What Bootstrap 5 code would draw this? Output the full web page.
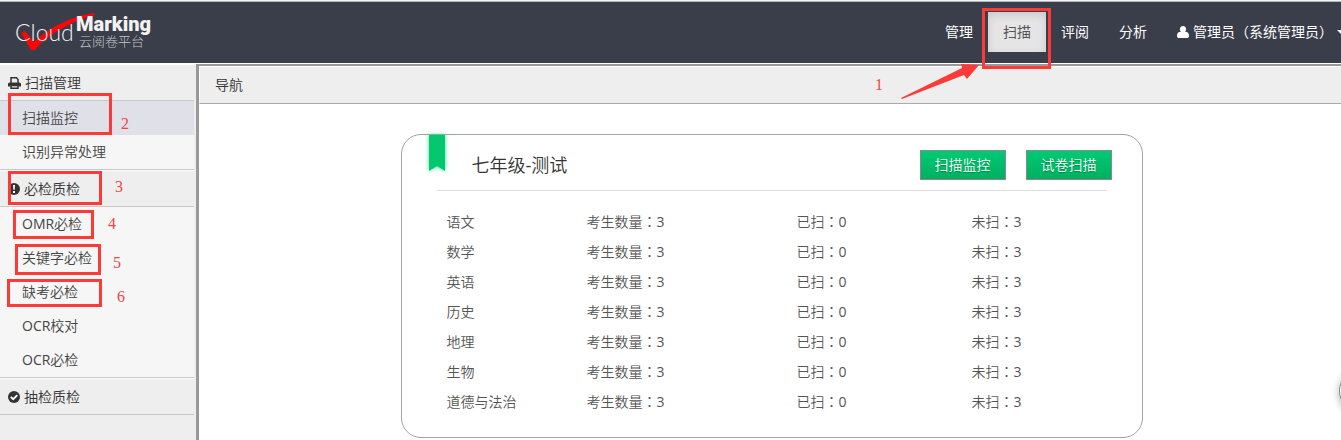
<!DOCTYPE html>
<html lang="zh-CN">
<head>
<meta charset="utf-8">
<meta name="viewport" content="width=device-width, initial-scale=1">
<title>云阅卷平台</title>
<link href="https://cdn.jsdelivr.net/npm/bootstrap@5.3.0/dist/css/bootstrap.min.css" rel="stylesheet">
<style>
  html, body { height: 100%; }
  body { font-family: "Open Sans", "Noto Sans CJK SC DemiLight", "Noto Sans CJK SC", sans-serif; font-size: 14px; line-height: 20px; color: #333; background: #fff; overflow: hidden; }
  a { color: inherit; text-decoration: none; }
  .topline { border-top: 1px solid #f4f4f4; }
  .topbar { height: 63px; border-top: 1px solid #b4b8bc; border-bottom: 1px solid #fff; background: #3a3d4a; }
  .logo { margin-left: 14px; }
  .topnav { height: 40px; margin: 10px -19px 0 0; color: #fff; font-family: "Open Sans", "Noto Sans CJK SC", sans-serif; }
  .topnav .nav-link { height: 40px; padding: 10px 15px; color: #fff; white-space: nowrap; }
  .topnav .nav-link.active { color: #555; background: #e5e5e5; box-shadow: inset 0 3px 8px rgba(0,0,0,.125); }
  .caret { border: 4px solid transparent; border-top-color: #fff; border-bottom: 0; }
  .sidebar { width: 196px; padding-right: 2px; background: #eee; }
  .side-head { height: 37px; padding-left: 8px; border-top: 1px solid #fff; border-bottom: 1px solid #c8c8c8; font-size: 14px; font-weight: 400; line-height: 20px; }
  .side-list { background: #f6f6f6; border-bottom: 1px solid #c8c8c8; }
  .side-list a { height: 34px; padding: 7px 22px; color: #444; }
  .side-list a.active { background: #e0e0e9; }
  .main { border-top: 2px solid #999; border-left: 3px solid #999; }
  .crumbs { height: 38px; padding: 8px 15px; border: solid #fff; border-width: 1px 0 0 1px; border-bottom: 1px solid #aaa; background: #eee; }
  .stage { padding: 30px 0 0 3px; }
  .exam { width: 742px; max-width: 100%; height: 304px; border: 1px solid #a2a2a2; border-radius: 20px; }
  .exam-head { padding: 0 30px 0 27px; height: 55px; }
  .exam-head h1 { margin: 19px 0 0 27px; font-size: 18px; line-height: 22px; font-weight: 400; }
  .ribbon { filter: drop-shadow(0 0 2px #2be08f); }
  .exam-actions { gap: 20px; margin-top: 15px; }
  .exam-head .btn { width: 86px; height: 30px; padding: 0; font-size: 14px; line-height: 20px; color: #fff; border: 1px solid #8a8a8a; border-radius: 0; background: linear-gradient(#00ca74, #00b061); text-shadow: 0 1px 1px rgba(0,0,0,.3); }
  .exam hr { margin: 0 35px; border-color: #ddd; opacity: 1; }
  .counts { width: 660px; margin: 16px 0 0 45px; table-layout: fixed; color: #555; }
  .counts th, .counts td { height: 30px; padding: 5px 0 0; font-weight: 400; line-height: 20px; text-align: left; vertical-align: top; }
  .colon { font-family: "Noto Sans CJK TC", sans-serif; line-height: 1; }
  .round-tool { right: -42px; top: 369px; width: 44px; height: 44px; padding: 0; border: 1px solid #888; border-radius: 50%; background: #fff; box-shadow: 0 2px 8px rgba(0,0,0,.3); }
  /* red walkthrough marks */
  .frame { border: 3px solid #fc3a38; pointer-events: none; z-index: 2; }
  .step { font: 16px/20px "Liberation Serif", serif; color: #f24444; z-index: 2; }
  .f1 { left: -6px; top: -4px; width: 69px; height: 61px; }
  .arrow { right: 66px; top: 50px; z-index: 2; }
  .s1 { right: 163px; top: 63px; }
  .f2 { left: 8px; top: -8px; width: 104px; height: 42px; } .s2 { left: 121px; top: 13px; }
  .f3 { left: 8px; top: 0; width: 94px; height: 34px; }     .s3 { left: 115px; top: 6px; }
  .f4 { left: 13px; top: 3px; width: 81px; height: 29px; }  .s4 { left: 108px; top: 7px; }
  .f5 { left: 15px; top: 3px; width: 86px; height: 31px; }  .s5 { left: 113px; top: 12px; }
  .f6 { left: 7px; top: 4px; width: 95px; height: 28px; }   .s6 { left: 117px; top: 12px; }
</style>
</head>
<body class="d-flex flex-column">
<header class="topline">
  <div class="topbar d-flex align-items-start justify-content-between">
    <a href="#" class="logo" aria-label="Cloud Marking 云阅卷平台">
      <svg width="150" height="60" viewBox="14 2 150 60" class="d-block">
        <path d="M21 33L25 31L34 42C48 28 72 16 94 13L95 15C76 20 50 32 35 50L31 50Z" fill="#fb0505"/>
        <text x="15" y="41" font-family="Lato" font-weight="300" font-size="23" fill="#f2f2f2">Cloud</text>
        <text x="76" y="31" font-family="Roboto" font-weight="900" font-size="20" fill="#f2f2f2">Marking</text>
        <text x="79" y="46" font-family="Noto Sans CJK SC" font-size="13" font-weight="300" fill="#c4c6ca">云阅卷平台</text>
      </svg>
    </a>
    <ul class="topnav nav flex-nowrap">
      <li class="nav-item"><a class="nav-link" href="#">管理</a></li>
      <li class="nav-item position-relative">
        <a class="nav-link active" href="#">扫描</a>
        <span class="frame f1 position-absolute"></span>
        <svg class="arrow position-absolute" width="80" height="38" viewBox="900 62 80 38"><path d="M901 98L962 68L961 64L979 65L967 79L964 75L902 99Z" fill="#fc3a38"/></svg>
        <span class="step s1 position-absolute">1</span>
      </li>
      <li class="nav-item"><a class="nav-link" href="#">评阅</a></li>
      <li class="nav-item"><a class="nav-link" href="#">分析</a></li>
      <li class="nav-item">
        <a class="nav-link d-flex align-items-center" href="#">
          <svg width="12" height="12" viewBox="0 0 11 12" preserveAspectRatio="none" class="me-1" fill="#fff"><path d="M5.500 0a3 3.200 0 0 1 1.800 5.700C9.500 5.400 11 7 11 9.700 11 11.200 10.300 12 9 12H2C.7 12 0 11.200 0 9.700 0 7 1.500 5.400 3.700 5.700A3 3.200 0 0 1 5.500 0z"/></svg>
          <span class="me-1">管理员（系统管理员）</span><span class="caret"></span>
        </a>
      </li>
    </ul>
  </div>
</header>
<div class="d-flex flex-grow-1">
  <nav class="sidebar flex-shrink-0">
    <h2 class="side-head d-flex align-items-center m-0">
      <svg width="13" height="12" viewBox="0 0 13 12" class="me-1" fill="none" stroke="#333" stroke-width="1.500"><path d="M3 6V.8h5.500L10 2.500V6M3 8.500h7v2.700H3z"/><path d="M0 9.500V7q0-1.500 1.500-1.500h10Q13 5.500 13 7v2.500h-2.500v-1.500h-8v1.500z" fill="#333" stroke="none"/></svg>
      扫描管理
    </h2>
    <div class="side-list">
      <a href="#" class="active d-block position-relative">扫描监控<span class="frame f2 position-absolute"></span><span class="step s2 position-absolute">2</span></a>
      <a href="#" class="d-block">识别异常处理</a>
    </div>
    <h2 class="side-head d-flex align-items-center m-0 position-relative">
      <svg width="12" height="12" viewBox="0 0 12 12" class="me-1"><circle cx="6" cy="6" r="6" fill="#333"/><path d="M5 2h2l-.3 4.800H5.300zM5 8h2v2H5z" fill="#fff"/></svg>
      必检质检
      <span class="frame f3 position-absolute"></span><span class="step s3 position-absolute">3</span>
    </h2>
    <div class="side-list">
      <a href="#" class="d-block position-relative">OMR必检<span class="frame f4 position-absolute"></span><span class="step s4 position-absolute">4</span></a>
      <a href="#" class="d-block position-relative">关键字必检<span class="frame f5 position-absolute"></span><span class="step s5 position-absolute">5</span></a>
      <a href="#" class="d-block position-relative">缺考必检<span class="frame f6 position-absolute"></span><span class="step s6 position-absolute">6</span></a>
      <a href="#" class="d-block">OCR校对</a>
      <a href="#" class="d-block">OCR必检</a>
    </div>
    <h2 class="side-head d-flex align-items-center m-0">
      <svg width="12" height="12" viewBox="0 0 12 12" class="me-1"><circle cx="6" cy="6" r="6" fill="#333"/><path d="M2.800 5.800L5.200 8.200 9.300 4.200" fill="none" stroke="#fff" stroke-width="1.800"/></svg>
      抽检质检
    </h2>
  </nav>
  <main class="main flex-grow-1">
    <div class="crumbs">导航</div>
    <div class="stage">
      <section class="exam mx-auto">
        <div class="exam-head d-flex align-items-start">
          <svg class="ribbon" width="16" height="36" viewBox="0 0 16 36"><path d="M0 0h16v36l-8-5-8 5z" fill="#04c76f"/></svg>
          <h1>七年级-测试</h1>
          <div class="exam-actions d-flex ms-auto">
            <button type="button" class="btn">扫描监控</button>
            <button type="button" class="btn">试卷扫描</button>
          </div>
        </div>
        <hr>
        <table class="counts">
          <colgroup><col style="width:140px"><col style="width:210px"><col style="width:175px"><col></colgroup>
          <tbody>
            <tr><th scope="row">语文</th><td>考生数量<span class="colon" lang="zh-TW">：</span>3</td><td>已扫<span class="colon" lang="zh-TW">：</span>0</td><td>未扫<span class="colon" lang="zh-TW">：</span>3</td></tr>
            <tr><th scope="row">数学</th><td>考生数量<span class="colon" lang="zh-TW">：</span>3</td><td>已扫<span class="colon" lang="zh-TW">：</span>0</td><td>未扫<span class="colon" lang="zh-TW">：</span>3</td></tr>
            <tr><th scope="row">英语</th><td>考生数量<span class="colon" lang="zh-TW">：</span>3</td><td>已扫<span class="colon" lang="zh-TW">：</span>0</td><td>未扫<span class="colon" lang="zh-TW">：</span>3</td></tr>
            <tr><th scope="row">历史</th><td>考生数量<span class="colon" lang="zh-TW">：</span>3</td><td>已扫<span class="colon" lang="zh-TW">：</span>0</td><td>未扫<span class="colon" lang="zh-TW">：</span>3</td></tr>
            <tr><th scope="row">地理</th><td>考生数量<span class="colon" lang="zh-TW">：</span>3</td><td>已扫<span class="colon" lang="zh-TW">：</span>0</td><td>未扫<span class="colon" lang="zh-TW">：</span>3</td></tr>
            <tr><th scope="row">生物</th><td>考生数量<span class="colon" lang="zh-TW">：</span>3</td><td>已扫<span class="colon" lang="zh-TW">：</span>0</td><td>未扫<span class="colon" lang="zh-TW">：</span>3</td></tr>
            <tr><th scope="row">道德与法治</th><td>考生数量<span class="colon" lang="zh-TW">：</span>3</td><td>已扫<span class="colon" lang="zh-TW">：</span>0</td><td>未扫<span class="colon" lang="zh-TW">：</span>3</td></tr>
          </tbody>
        </table>
      </section>
    </div>
  </main>
</div>
<button type="button" class="round-tool position-fixed" aria-label="工具"></button>
<script src="https://cdn.jsdelivr.net/npm/bootstrap@5.3.0/dist/js/bootstrap.bundle.min.js"></script>
</body>
</html>
